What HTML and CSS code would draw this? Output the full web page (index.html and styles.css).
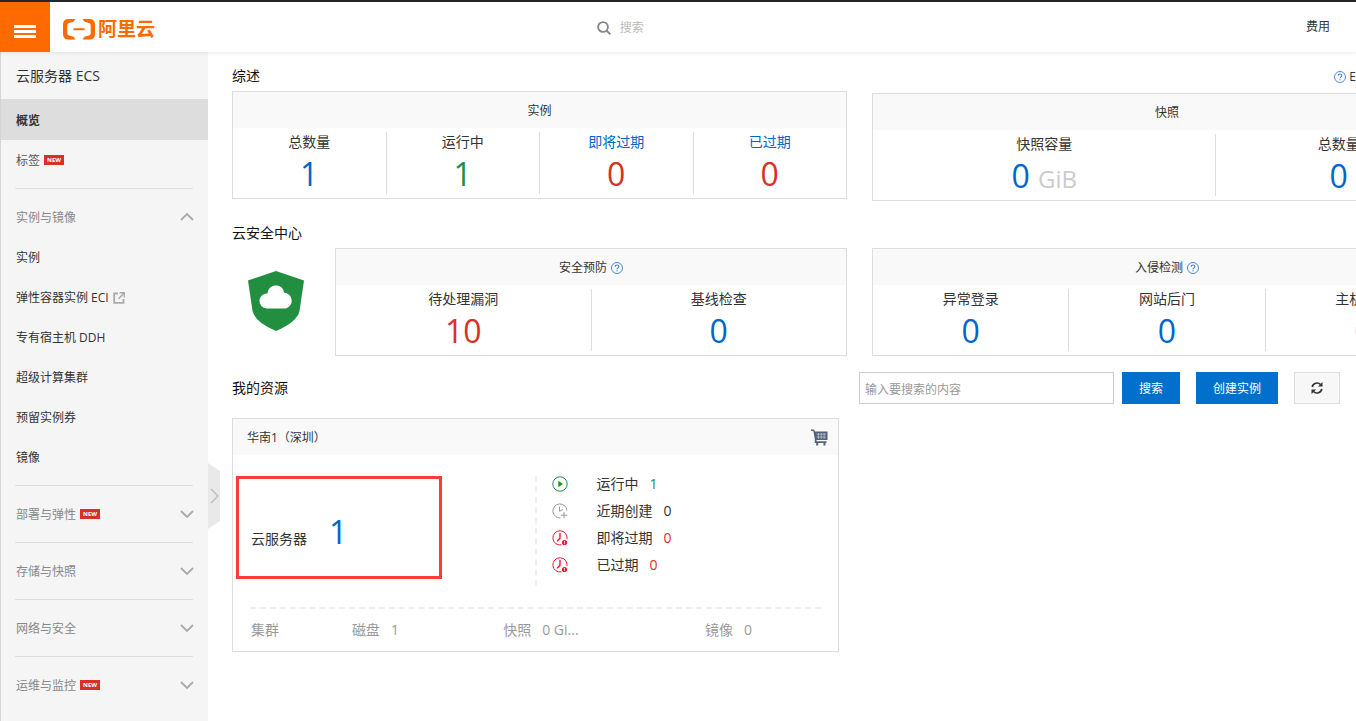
FILE: index.html
```html
<!DOCTYPE html>
<html lang="zh-CN">
<head>
<meta charset="utf-8">
<title>云服务器 ECS</title>
<link rel="stylesheet" href="styles.css">
</head>
<body>
<svg class="defs" aria-hidden="true">
  <symbol id="help" viewBox="0 0 12 12"><circle cx="6" cy="6" r="5.5" fill="none" stroke="currentColor" stroke-width=".9"/><path d="M4.2 4.8C4.2 2.4 7.9 2.5 7.8 4.6 7.7 5.8 6 5.9 6 7.2" fill="none" stroke="currentColor" stroke-width="1.1"/><path d="M5.4 8.2h1.2v1.1H5.4z" fill="currentColor"/></symbol>
  <symbol id="chevron" viewBox="0 0 14 8"><path d="M1 1l6 6 6-6" fill="none" stroke="currentColor" stroke-width="1.8"/></symbol>
  <symbol id="expire" viewBox="0 0 16 16"><path d="M9.5 14.8A7.1 7.1 0 1 1 15 9" fill="none" stroke="currentColor"/><path d="M8 3v5.2l-2.8 3" fill="none" stroke="currentColor" stroke-width="1.4"/><circle cx="12.5" cy="12.5" r="2.6" fill="currentColor"/><path d="M12.5 11v1.7M12.5 13.3v.8" stroke="#fff" stroke-width=".9"/></symbol>
</svg>
<header class="topbar">
  <div class="brand-area">
    <button class="menu-button" aria-label="菜单"><span></span><span></span><span></span></button>
    <a class="brand" href="#">
      <svg class="brand-mark" viewBox="0 0 32 21" aria-hidden="true"><path d="M12.500 0H5.500Q0 0 0 5.500V15Q0 20.500 5.500 20.500H12.500L10.500 17.800 6 16.500Q4.300 16 4.300 14.300V6.200Q4.300 4.500 6 4L10.500 2.700ZM19.500 0h7Q32 0 32 5.500V15Q32 20.500 26.500 20.500H19.500L21.500 17.800 26 16.500Q27.700 16 27.700 14.300V6.200Q27.700 4.500 26 4L21.500 2.700ZM10.500 9.300H21.500V11.200H10.500Z" fill="#ff6a00"/></svg>
      <span>阿里云</span>
    </a>
  </div>
  <label class="top-search">
    <svg viewBox="0 0 14 14" aria-hidden="true"><circle cx="6" cy="6" r="4.900" fill="none" stroke="#888" stroke-width="1.900"/><path d="M9.600 9.600l3.700 3.700" stroke="#888" stroke-width="2"/></svg>
    <input type="search" placeholder="搜索" aria-label="搜索">
  </label>
  <nav class="top-links"><a href="#">费用</a></nav>
</header>
<div class="shell">
  <aside class="sidebar">
    <h1 class="side-title">云服务器 ECS</h1>
    <nav class="side-nav">
      <a class="side-item overview" href="#">概览</a>
      <a class="side-item soft" href="#">标签<span class="new">NEW</span></a>
      <section class="side-group">
        <button class="group-toggle"><span class="name">实例与镜像</span><svg class="chevron up"><use href="#chevron"/></svg></button>
        <a class="side-item" href="#">实例</a>
        <a class="side-item" href="#">弹性容器实例 ECI<svg class="external" viewBox="0 0 12 12" aria-hidden="true"><path d="M5 1.500H1.200V10.800H10.500V7" fill="none" stroke="#aaa" stroke-width="1.800"/><path d="M6.500 .7H11.500V5.500M11 1.200L5.500 6.700" fill="none" stroke="#aaa" stroke-width="1.600"/></svg></a>
        <a class="side-item" href="#">专有宿主机 DDH</a>
        <a class="side-item" href="#">超级计算集群</a>
        <a class="side-item" href="#">预留实例券</a>
        <a class="side-item" href="#">镜像</a>
      </section>
      <section class="side-group"><button class="group-toggle"><span class="name">部署与弹性</span><span class="new">NEW</span><svg class="chevron"><use href="#chevron"/></svg></button></section>
      <section class="side-group"><button class="group-toggle"><span class="name">存储与快照</span><svg class="chevron"><use href="#chevron"/></svg></button></section>
      <section class="side-group"><button class="group-toggle"><span class="name">网络与安全</span><svg class="chevron"><use href="#chevron"/></svg></button></section>
      <section class="side-group"><button class="group-toggle"><span class="name">运维与监控</span><span class="new">NEW</span><svg class="chevron"><use href="#chevron"/></svg></button></section>
    </nav>
    <button class="collapse" aria-label="收起导航"><svg viewBox="0 0 12 66"><path d="M0 0L12 8V58L0 66Z" fill="#e9e9e9"/><path d="M3 26l7 7-7 7" fill="none" stroke="#bbb" stroke-width="1.300"/></svg></button>
  </aside>
  <main class="content">
    <div class="section-head"><h2>综述</h2><a class="guide" href="#"><svg class="help"><use href="#help"/></svg>E</a></div>
    <div class="panel-row">
      <div class="column">
        <section class="panel">
          <h3>实例</h3>
          <div class="cells">
            <div class="cell"><span>总数量</span><a class="value blue" href="#">1</a></div>
            <div class="cell"><span>运行中</span><a class="value green" href="#">1</a></div>
            <div class="cell"><a class="blue" href="#">即将过期</a><a class="value red" href="#">0</a></div>
            <div class="cell"><a class="blue" href="#">已过期</a><a class="value red" href="#">0</a></div>
          </div>
        </section>
      </div>
      <div class="column lowered">
        <section class="panel">
          <h3>快照</h3>
          <div class="cells">
            <div class="cell wide"><span>快照容量</span><span class="value"><a class="blue" href="#">0</a> <small>GiB</small></span></div>
            <div class="cell narrow"><span>总数量</span><a class="value blue" href="#">0</a></div>
          </div>
        </section>
      </div>
    </div>
    <div class="section-head security-head"><h2>云安全中心</h2></div>
    <div class="panel-row">
      <div class="column">
        <svg class="shield" viewBox="0 0 56 60" aria-hidden="true"><path d="M28 0L56 9.500 51.500 40Q49 51 28 60 7 51 4.500 40L0 9.500Z" fill="#218f3f"/><path d="M18.500 37.500A7.500 7.500 0 0 1 19.500 22.500C20.500 12 35 12 36 21.500A8.200 8.200 0 0 1 38 37.500Z" fill="#fff"/></svg>
        <section class="panel">
          <h3>安全预防<svg class="help"><use href="#help"/></svg></h3>
          <div class="cells">
            <div class="cell"><span>待处理漏洞</span><a class="value red" href="#">10</a></div>
            <div class="cell"><span>基线检查</span><a class="value blue" href="#">0</a></div>
          </div>
        </section>
      </div>
      <div class="column">
        <section class="panel">
          <h3>入侵检测<svg class="help"><use href="#help"/></svg></h3>
          <div class="cells">
            <div class="cell"><span>异常登录</span><a class="value blue" href="#">0</a></div>
            <div class="cell"><span>网站后门</span><a class="value blue" href="#">0</a></div>
            <div class="cell"><span>主机异常</span><a class="value blue" href="#">0</a></div>
          </div>
        </section>
      </div>
    </div>
    <div class="section-head resource-head">
      <h2>我的资源</h2>
      <form class="tools">
        <input type="text" placeholder="输入要搜索的内容" aria-label="输入要搜索的内容">
        <button class="primary" type="button">搜索</button>
        <button class="primary" type="button">创建实例</button>
        <button class="refresh" type="button" aria-label="刷新"><svg viewBox="0 0 12 12"><path d="M1.200 5A4.900 4.900 0 0 1 9.500 2.500M10.800 7A4.900 4.900 0 0 1 2.500 9.500" fill="none" stroke="#333" stroke-width="1.700"/><path d="M11.500 0V4.500H7ZM.5 12V7.500H5Z" fill="#333"/></svg></button>
      </form>
    </div>
    <section class="panel region">
      <div class="region-head"><h3>华南1（深圳）</h3>
        <a href="#" aria-label="购买"><svg class="cart" viewBox="0 0 17 17"><path d="M0 .5H3L4 2.500H16.500V11H5.500V12.200H15.500V14H3.800V10L2.300 2H0Z" fill="#56637a"/><path d="M5.500 5.200H15M5.500 8H15M7.500 4V10M10.300 4V10M13.100 4V10" stroke="#fff" stroke-width=".8" opacity=".6"/><path d="M5.200 14h2v2.500h-2zM12.500 14h2v2.500h-2z" fill="#56637a"/></svg></a>
      </div>
      <div class="region-body">
        <div class="region-main">
          <div class="servers"><span>云服务器</span><a class="value blue" href="#">1</a></div>
          <ul class="status">
            <li><svg class="green" viewBox="0 0 16 16"><circle cx="8" cy="8" r="7.200" fill="none" stroke="currentColor"/><path d="M6.300 4.800L11 8 6.300 11.200Z" fill="#14a014"/></svg><span>运行中</span><a class="green" href="#">1</a></li>
            <li><svg class="grey" viewBox="0 0 16 16"><path d="M8.500 14.900A7 7 0 1 1 14.900 7.500M7.500 3.500V8.200L11 6.500M12 9v6.400M8.800 12.200h6.400" fill="none" stroke="currentColor"/></svg><span>近期创建</span><a href="#">0</a></li>
            <li><svg class="alert"><use href="#expire"/></svg><span>即将过期</span><a class="red" href="#">0</a></li>
            <li><svg class="alert"><use href="#expire"/></svg><span>已过期</span><a class="red" href="#">0</a></li>
          </ul>
        </div>
        <div class="region-foot">
          <div><span>集群</span></div>
          <div><span>磁盘</span><a href="#">1</a></div>
          <div><span>快照</span><a href="#">0 Gi...</a></div>
          <div><span>镜像</span><a href="#">0</a></div>
        </div>
      </div>
      <div class="marker"></div>
    </section>
  </main>
</div>
</body>
</html>
```

FILE: styles.css
```css
* { box-sizing: border-box; }
body {
  margin: 0;
  min-height: 100vh;
  display: flex;
  flex-direction: column;
  overflow-x: hidden;
  background: #fff;
  color: #333;
  font: 14px/20px "Open Sans", "Noto Sans CJK SC", sans-serif;
}
h1, h2, h3, ul { margin: 0; padding: 0; font-weight: 400; }
ul { list-style: none; }
a { color: inherit; text-decoration: none; }
button, input { font: inherit; border: 0; padding: 0; margin: 0; background: none; border-radius: 0; }
button { cursor: pointer; }
svg { display: block; flex: none; }
.defs { position: absolute; width: 0; height: 0; }

.topbar {
  display: flex;
  height: 52px;
  border-top: 2px solid #262626;
  background: #fff;
  box-shadow: 0 1px 4px rgba(0, 0, 0, .08);
  position: relative;
  z-index: 1;
  font-size: 12px;
}
.brand-area { display: flex; width: 44%; }
.menu-button {
  display: flex;
  flex-direction: column;
  align-items: center;
  justify-content: center;
  gap: 2px;
  width: 50px;
  padding-top: 8px;
  background: #ff6a00;
}
.menu-button span { width: 22px; height: 3px; background: #fff; }
.brand {
  display: flex;
  align-items: center;
  gap: 3px;
  margin-left: 13px;
  padding-top: 4px;
  color: #ff6a00;
  font-size: 19px;
  font-weight: 700;
}
.brand-mark { width: 32px; height: 21px; }
.top-search { display: flex; align-items: center; gap: 9px; padding-top: 2px; }
.top-search svg { width: 14px; height: 14px; }
.top-search input { width: 200px; color: #333; outline: 0; }
.top-search input::placeholder { color: #bbb; }
.top-links { display: flex; align-items: center; margin-left: auto; padding-right: 26px; }

.shell { display: flex; flex: 1; }
.sidebar {
  position: relative;
  flex: none;
  width: 208px;
  background: #f5f5f5;
  border-left: 1px solid #d5d5d5;
  font-size: 12px;
}
.side-title { padding: 0 15px; font-size: 14px; line-height: 47px; }
.side-item { display: flex; align-items: center; height: 40px; padding: 2px 15px 0; }
.side-item.overview { height: 41px; background: #ddd; font-weight: 700; }
.side-item.soft { margin-bottom: 8px; color: #555; }
.new {
  margin-left: 4px;
  padding: 0 3px;
  background: #d93026;
  color: #fff;
  font: 700 6px/10px "Open Sans", sans-serif;
}
.side-item .new { margin-bottom: 2px; }
.side-group { padding: 8px 0; position: relative; }
.side-group::before {
  content: "";
  display: block;
  height: 1px;
  margin: -8px 15px 8px 14px;
  background: #ddd;
}
.group-toggle {
  display: flex;
  align-items: center;
  width: 100%;
  height: 40px;
  padding: 0 14px 0 15px;
  color: #888;
}
.name { padding-top: 2px; }
.chevron { width: 14px; height: 8px; margin-left: auto; color: #aaa; }
.chevron.up { transform: rotate(180deg); }
.external { width: 12px; height: 12px; margin-left: 4px; }
.collapse { position: absolute; left: 207px; top: 411px; width: 12px; height: 66px; }

.content { flex: 1; min-width: 0; padding: 9px 0 24px 24px; overflow: hidden; }
.section-head { display: flex; align-items: center; justify-content: space-between; height: 30px; }
h2 { font-size: 14px; color: #111; }
.security-head { margin-top: 17px; }
.guide { display: flex; align-items: center; gap: 3px; font-size: 12px; padding-top: 2px; }
.help { width: 12px; height: 12px; color: #3c7ed0; }
.panel-row { display: flex; align-items: flex-start; min-width: 1230px; }
.column { display: flex; flex: 0 0 50%; }
.column + .column { padding-left: 25px; }
.column.lowered { padding-top: 2px; }
.panel { flex: 1; border: 1px solid #ddd; }
.panel h3 {
  display: flex;
  align-items: center;
  justify-content: center;
  gap: 4px;
  height: 36px;
  padding-top: 2px;
  background: #f9f9f9;
  font-size: 12px;
}
.cells { display: flex; padding: 4px 0; }
.cell {
  display: flex;
  flex: 1;
  flex-direction: column;
  align-items: center;
  height: 62px;
}
.cell + .cell { border-left: 1px solid #ddd; }
.cell.wide { flex-grow: 7; }
.cell.narrow { flex-grow: 5; }
.value { font-size: 32px; line-height: 44px; }
.value small { color: #ccc; font-size: 24px; }
.blue { color: #06c; }
.green { color: #218f3f; }
.red { color: #d93026; }
.grey { color: #999; }
.alert { color: #f5142d; }
.shield { width: 56px; height: 60px; margin: 23px 31px 0 16px; }

.resource-head { height: 32px; margin: 16px 0 14px; padding-right: 16px; }
.tools { display: flex; font-size: 12px; }
.tools input { width: 255px; height: 32px; padding: 2px 5px 0; border: 1px solid #ccc; margin-right: 8px; }
.tools input::placeholder { color: #999; }
.primary { height: 32px; margin-right: 16px; padding: 2px 17px 0; background: #0070cc; color: #fff; }
.refresh {
  display: flex;
  align-items: center;
  justify-content: center;
  width: 46px;
  border: 1px solid #ddd;
  background: #f7f7f7;
}
.refresh svg { width: 12px; height: 12px; }

.region { position: relative; width: 54%; }
.region-head {
  display: flex;
  align-items: center;
  justify-content: space-between;
  padding: 0 10px 0 14px;
  background: #f9f9f9;
}
.cart { width: 17px; height: 17px; }
.region-body { padding: 21px 17px 0; }
.region-main { display: flex; align-items: flex-start; margin-bottom: 21px; }
.servers {
  display: flex;
  align-items: baseline;
  gap: 22px;
  flex: 0 0 50%;
  padding: 34px 1px 0;
}
.status { flex: 1; height: 110px; padding-left: 15px; border-left: 2px dashed #eee; }
.status li { display: flex; align-items: center; height: 20px; margin-bottom: 7px; }
.status li:first-child { margin-top: -2px; }
.status svg { width: 16px; height: 16px; margin-right: 28px; }
.status a { margin-left: 11px; }
.region-foot {
  display: grid;
  grid-template-columns: 20fr 30fr 40fr 23fr;
  align-items: center;
  height: 44px;
  padding-left: 1px;
  border-top: 2px dashed #eee;
  color: #999;
}
.region-foot a { margin-left: 11px; }
.marker {
  position: absolute;
  left: 3px;
  top: 57px;
  width: 206px;
  height: 103px;
  border: 3px solid #fb3a3a;
  pointer-events: none;
}
```
